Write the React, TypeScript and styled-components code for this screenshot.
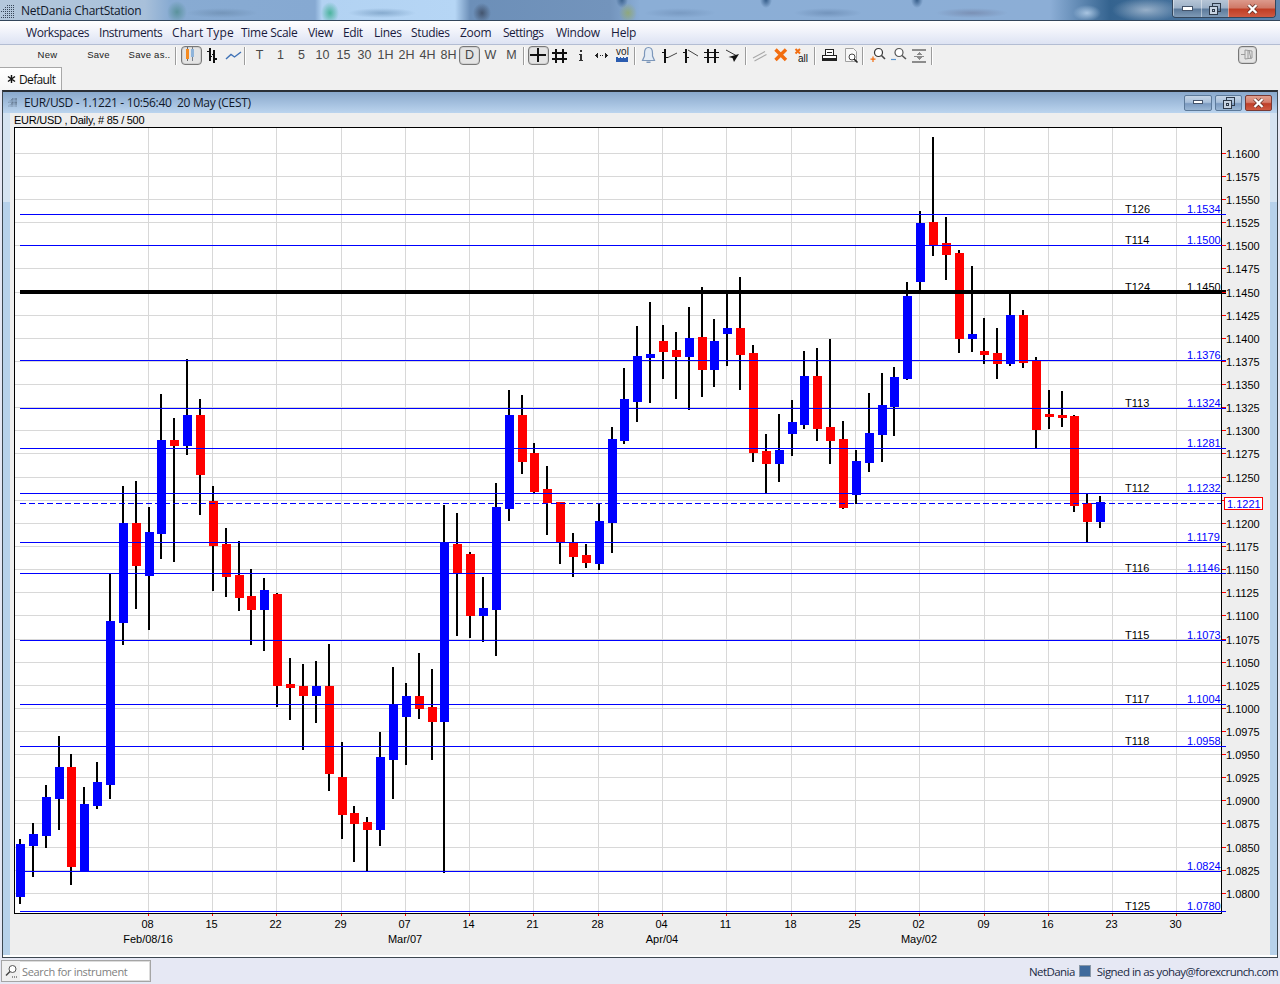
import React from "react";
import styled, { createGlobalStyle } from "styled-components";

const Global = createGlobalStyle`
  html, body { margin: 0; padding: 0; background: #e6e8f4; }
  #root { width: 1280px; height: 984px; overflow: hidden; }
`;

const UI = `"Open Sans", "Noto Sans", "Liberation Sans", sans-serif`;
const ARIAL = `"Liberation Sans", Arial, sans-serif`;

const Page = styled.div`
  width: 1280px;
  height: 984px;
  display: flex;
  flex-direction: column;
  background: #e6e8f4;
  font-family: ${UI};
  overflow: hidden;
`;

const TitleBar = styled.header`
  height: 21px;
  box-sizing: border-box;
  border-bottom: 1px solid #33465c;
  display: flex;
  align-items: flex-start;
  background:
    radial-gradient(ellipse 10px 11px at 177px 12px, rgba(60,130,120,.6), transparent),
    radial-gradient(ellipse 36px 5px at 222px 13px, rgba(80,110,140,.35), transparent),
    radial-gradient(ellipse 9px 11px at 330px 13px, rgba(40,170,130,.75), transparent),
    radial-gradient(ellipse 34px 5px at 382px 13px, rgba(90,130,170,.5), transparent),
    radial-gradient(ellipse 9px 10px at 482px 13px, rgba(50,60,80,.7), transparent),
    radial-gradient(ellipse 9px 10px at 628px 13px, rgba(150,170,90,.7), transparent),
    radial-gradient(ellipse 36px 5px at 680px 13px, rgba(80,110,150,.3), transparent),
    radial-gradient(ellipse 34px 5px at 828px 13px, rgba(70,100,140,.35), transparent),
    radial-gradient(ellipse 6px 8px at 766px 0, rgba(40,80,125,.85), transparent),
    radial-gradient(ellipse 6px 8px at 917px 0, rgba(40,80,125,.85), transparent),
    radial-gradient(ellipse 6px 8px at 622px 0, rgba(40,80,125,.75), transparent),
    radial-gradient(ellipse 36px 5px at 972px 13px, rgba(90,90,120,.35), transparent),
    radial-gradient(ellipse 14px 8px at 1087px 13px, rgba(190,215,240,.8), transparent),
    radial-gradient(ellipse 34px 12px at 1146px 10px, rgba(190,205,222,.7), transparent),
    linear-gradient(90deg, #b4c8dc 0, #a8c0da 145px, #88abd2 170px, #86a9d2 315px, #b2d2f2 322px, #b6d6f5 455px, #6c8fb8 470px, #7394bc 610px, #8baed6 640px, #8caed6 1050px, #34638f 1110px, #5e86b0 1280px);
`;

const AppGrip = styled.svg`
  width: 15px;
  height: 14px;
  margin: 5px 0 0 1px;
  flex: none;
`;

const AppName = styled.span`
  margin: 2px 0 0 5px;
  font-size: 12px;
  line-height: 17px;
  color: #10182a;
  letter-spacing: -0.26px;
`;

const WinControls = styled.div`
  margin-left: auto;
  margin-right: 4px;
  height: 17px;
  display: flex;
  border: 1px solid #33465c;
  border-top: 0;
  border-radius: 0 0 4px 4px;
  overflow: hidden;
`;

const WinBtn = styled.div<{ $w: number; $close?: boolean }>`
  width: ${(p) => p.$w}px;
  display: flex;
  align-items: center;
  justify-content: center;
  border-left: 1px solid rgba(255, 255, 255, 0.45);
  background: ${(p) =>
    p.$close
      ? "linear-gradient(180deg,#dc9a8c 0,#d07a68 45%,#c03e25 55%,#cf5a42 100%)"
      : "linear-gradient(180deg,#b6c5d6 0,#9db1c8 45%,#5d7b9c 55%,#7f9ab6 100%)"};
`;

const MenuBar = styled.nav`
  height: 24px;
  box-sizing: border-box;
  border-bottom: 1px solid #b3bdd3;
  padding-left: 26px;
  display: flex;
  align-items: center;
  background: linear-gradient(180deg, #ffffff 0, #f6f7fc 30%, #dde3f3 100%);
`;

const MenuItem = styled.span<{ $w: number; $sp: number }>`
  width: ${(p) => p.$w}px;
  flex: none;
  font-size: 12px;
  color: #191a3c;
  letter-spacing: ${(p) => p.$sp}px;
  line-height: 20px;
  white-space: nowrap;
`;

const Toolbar = styled.div`
  height: 22px;
  box-sizing: border-box;
  padding: 1px 23px 0 22px;
  display: flex;
  align-items: flex-start;
  background: #f0f0f0;
`;

const SaveBtn = styled.div`
  width: 51px;
  height: 19px;
  font: 9.5px/17px ${ARIAL};
  letter-spacing: 0.25px;
  color: #222;
  text-align: center;
  flex: none;
`;

const Sep = styled.div<{ $l?: number; $r?: number }>`
  width: 1px;
  height: 18px;
  margin: 1px ${(p) => p.$r ?? 0}px 0 ${(p) => p.$l ?? 0}px;
  background: #9c9c9c;
  border-right: 1px solid #fff;
  flex: none;
`;

const ToolBtn = styled.div<{ $on?: boolean }>`
  width: 21px;
  height: 19px;
  box-sizing: border-box;
  flex: none;
  display: flex;
  align-items: center;
  justify-content: center;
  font: 12.5px/19px ${ARIAL};
  color: #484848;
  border-radius: 4px;
  ${(p) => (p.$on ? "border: 1px solid #777; background: #e4e4e4; box-shadow: inset 0 0 0 1px #d0d0d0;" : "")}
`;

const Ico = styled.svg`
  width: 21px;
  height: 19px;
  flex: none;
`;

const PinBtn = styled(ToolBtn)`
  margin-left: auto;
  width: 19px;
  height: 18px;
`;

const TabStrip = styled.div`
  height: 23px;
  background: #f0f0f0;
  display: flex;
  align-items: flex-end;
`;

const Tab = styled.div`
  width: 62px;
  height: 23px;
  box-sizing: border-box;
  border: 1px solid #a8a8a8;
  border-bottom: 0;
  border-left: 0;
  background: linear-gradient(180deg, #ffffff, #f6f6f6);
  display: flex;
  align-items: center;
  padding-left: 7px;
  gap: 3px;
  font-size: 12px;
  letter-spacing: -0.65px;
  color: #111;
`;

const ChartWindow = styled.section`
  height: 868px;
  margin: 0 2px;
  box-sizing: border-box;
  border: 1px solid #3d4750;
  border-top: 2px solid #2a2f36;
  display: flex;
  flex-direction: column;
  background: #fff;
`;

const ChartTitle = styled.div`
  height: 21px;
  flex: none;
  display: flex;
  align-items: center;
  padding-left: 5px;
  background: linear-gradient(180deg, #8aa9cd 0, #a2bedd 50%, #bbd4ee 100%);
`;

const ChartTitleText = styled.span`
  margin-left: 6px;
  font-size: 12px;
  letter-spacing: -0.33px;
  color: #10182a;
  white-space: pre;
`;

const InnerControls = styled.div`
  margin-left: auto;
  margin-right: 5px;
  display: flex;
  gap: 3px;
`;

const InnerBtn = styled.div<{ $close?: boolean; $w?: number }>`
  width: ${(p) => p.$w ?? 27}px;
  height: 16px;
  box-sizing: border-box;
  border: 1px solid ${(p) => (p.$close ? "#7a3a34" : "#5d7a9a")};
  border-radius: 2px;
  display: flex;
  align-items: center;
  justify-content: center;
  background: ${(p) =>
    p.$close
      ? "linear-gradient(180deg,#e0a090 0,#d67e6c 45%,#be3e28 55%,#cf5a42 100%)"
      : "linear-gradient(180deg,#c4d4e6 0,#a9c0da 45%,#7b9ac0 55%,#9ab6d4 100%)"};
`;

const ChartBody = styled.div`
  height: 842px;
  flex: none;
  padding: 0 7px;
  background: linear-gradient(180deg, #d5e3f1 0, #d5e3f1 89px, #b7d1ea 89px);
`;

const ChartPanel = styled.div`
  height: 842px;
  background: #eeeeee;
  display: flex;
  flex-direction: column;
`;

const ChartCaption = styled.div`
  height: 14px;
  flex: none;
  padding-left: 4px;
  font: 11px/14px ${ARIAL};
  letter-spacing: -0.26px;
  color: #000;
`;

const PlotSvg = styled.svg`
  width: 1259px;
  height: 828px;
  display: block;
  shape-rendering: crispEdges;
`;

const AxisText = styled.text<{ $c?: string }>`
  font: 11px ${ARIAL};
  fill: ${(p) => p.$c ?? "#000"};
`;

const StatusBar = styled.footer`
  height: 26px;
  flex: none;
  display: flex;
  align-items: center;
  padding: 0 2px 0 1px;
  box-sizing: border-box;
  background: #e6e8f4;
`;

const SearchBox = styled.div`
  width: 150px;
  height: 22px;
  box-sizing: border-box;
  border: 1px solid #a5a5a5;
  box-shadow: inset 0 0 0 1px #dcdcdc;
  background: #fff;
  display: flex;
  align-items: center;
  overflow: hidden;
`;

const SearchIcon = styled.div`
  width: 18px;
  height: 20px;
  flex: none;
  background: #f0f0f0;
  display: flex;
  align-items: center;
  justify-content: center;
`;

const SearchHint = styled.span`
  margin-left: 2px;
  font-size: 11px;
  letter-spacing: -0.33px;
  color: #808080;
`;

const StatusRight = styled.div`
  margin-left: auto;
  display: flex;
  align-items: center;
  font-size: 11.5px;
  letter-spacing: -0.55px;
  color: #1a2a44;
`;

const StatusSwatch = styled.span`
  width: 12px;
  height: 12px;
  margin: 0 6px 0 4px;
  box-sizing: border-box;
  border: 1px solid #8a98a8;
  background: #3f6a9c;
`;

/* ---------- data ---------- */
type C = [0 | 1, number, number, number, number]; // 0 blue, 1 red: high, top, bottom, low
const candles: C[] = [
  [0,839,844,897,904],[0,823,834,846,877],[0,785,797,836,848],[0,736,767,799,830],[1,754,767,867,885],
  [0,787,804,871,871],[0,762,782,806,809],[0,573,621,785,799],[0,486,523,623,645],[1,481,523,566,609],
  [0,507,532,576,630],[0,394,440,534,559],[1,418,440,446,562],[0,359,415,446,455],[1,399,415,475,515],
  [1,486,501,546,591],[1,528,544,577,597],[1,541,575,598,611],[1,569,596,610,645],[0,578,590,610,651],
  [1,593,594,686,707],[1,658,684,688,720],[1,664,686,696,750],[0,661,686,696,723],[1,644,686,774,791],
  [1,742,777,815,839],[1,806,813,824,862],[1,817,822,830,871],[0,732,757,830,846],[0,667,704,760,799],
  [0,683,696,717,765],[1,653,696,709,719],[1,669,707,722,760],[0,505,543,722,873],[1,513,544,573,636],
  [1,552,554,616,638],[0,577,608,616,642],[0,483,507,610,656],[0,390,415,509,521],[1,395,415,462,474],
  [1,443,453,492,493],[1,466,489,503,535],[1,502,502,543,564],[1,533,543,557,577],[1,544,555,563,568],
  [0,503,521,564,570],[0,427,439,523,553],[0,368,399,441,444],[0,326,356,402,422],[0,302,354,358,403],
  [1,325,341,352,379],[1,332,350,357,399],[0,307,338,357,410],[1,287,337,370,397],[0,319,341,370,387],
  [0,293,328,334,366],[1,277,328,355,390],[1,345,353,453,462],[1,434,451,464,493],[0,414,450,464,482],
  [0,400,422,434,456],[0,351,376,425,429],[1,348,376,429,441],[1,339,427,441,464],[1,421,439,508,509],
  [0,450,461,495,504],[0,393,433,463,472],[0,373,405,435,462],[0,367,377,407,436],[0,282,296,379,380],
  [0,211,223,282,292],[1,137,222,245,256],[1,217,243,255,280],[1,250,253,339,353],[0,266,334,339,352],
  [1,318,351,355,364],[1,328,353,364,379],[0,293,315,364,366],[1,310,315,363,368],[1,357,361,430,448],
  [1,390,414,417,429],[1,391,415,418,427],[1,415,416,506,512],[1,493,503,522,542],[0,496,502,522,528],
];

const priceTicks: [string, number][] = [
  ["1.1600",153],["1.1575",176],["1.1550",199],["1.1525",222],["1.1500",245],["1.1475",268],["1.1450",292],
  ["1.1425",315],["1.1400",338],["1.1375",361],["1.1350",384],["1.1325",407],["1.1300",430],["1.1275",453],
  ["1.1250",477],["",500],["1.1200",523],["1.1175",546],["1.1150",569],["1.1125",592],["1.1100",615],
  ["1.1075",639],["1.1050",662],["1.1025",685],["1.1000",708],["1.0975",731],["1.0950",754],["1.0925",777],
  ["1.0900",800],["1.0875",823],["1.0850",847],["1.0825",870],["1.0800",893],
];

const timeTicks: [string, number, string?][] = [
  ["08",148,"Feb/08/16"],["15",212],["22",276],["29",341],["07",405,"Mar/07"],["14",469],["21",533],["28",598],
  ["04",662,"Apr/04"],["11",726],["18",791],["25",855],["02",919,"May/02"],["09",984],["16",1048],["23",1112],["30",1176],
];

type L = { y: number; v: string; t?: string; end?: number };
const levels: L[] = [
  { y: 214, v: "1.1534", t: "T126" },
  { y: 245, v: "1.1500", t: "T114" },
  { y: 360, v: "1.1376" },
  { y: 408, v: "1.1324", t: "T113" },
  { y: 448, v: "1.1281" },
  { y: 493, v: "1.1232", t: "T112" },
  { y: 542, v: "1.1179" },
  { y: 573, v: "1.1146", t: "T116" },
  { y: 640, v: "1.1073", t: "T115" },
  { y: 704, v: "1.1004", t: "T117" },
  { y: 746, v: "1.0958", t: "T118" },
  { y: 871, v: "1.0824", end: 1221 },
  { y: 911, v: "1.0780", t: "T125" },
];

const BLUE = "#0000ff";
const RED = "#ff0000";

function Chart() {
  return (
    <PlotSvg viewBox="10 127 1259 828">
      <rect x={14} y={127} width={1208} height={787} fill="#000" />
      <rect x={15} y={128} width={1206} height={785} fill="#fff" />
      {priceTicks.map(([, y]) => (
        <rect key={y} x={15} y={y} width={1206} height={1} fill="#d8d8d8" />
      ))}
      {timeTicks.map(([, x]) => (
        <rect key={x} x={x} y={128} width={1} height={785} fill="#d8d8d8" />
      ))}
      {candles.map(([c, hi, top, bot, lo], i) => {
        const left = Math.round(16 + 12.857 * i + (i >= 25 ? 0.1 : 0));
        return (
          <g key={i}>
            <rect x={left + 3} y={hi} width={2} height={lo - hi} fill="#000" />
            <rect x={left} y={top} width={9} height={bot - top} fill={c ? RED : BLUE} />
          </g>
        );
      })}
      {levels.map((l) => (
        <g key={l.y}>
          <rect x={20} y={l.y} width={(l.end ?? 1226) - 20} height={1} fill={BLUE} />
          {l.t && <AxisText x={1125} y={l.y - 1}>{l.t}</AxisText>}
          <AxisText x={1187} y={l.y - 1} $c={BLUE}>{l.v}</AxisText>
        </g>
      ))}
      <AxisText x={1125} y={291}>T124</AxisText>
      <AxisText x={1187} y={291}>1.1450</AxisText>
      <rect x={20} y={290} width={1206} height={4} fill="#000" />
      <line x1={20} y1={503.5} x2={1221} y2={503.5} stroke={BLUE} strokeWidth={1} strokeDasharray="6 3" />
      {priceTicks.map(([s, y]) => (
        <g key={y}>
          <rect x={1222} y={y} width={4} height={1} fill={RED} />
          {s && <AxisText x={1226} y={y + 5}>{s}</AxisText>}
        </g>
      ))}
      <rect x={1224.5} y={497.5} width={38} height={12} fill="#fff" stroke={RED} />
      <AxisText x={1227} y={508} $c={BLUE}>1.1221</AxisText>
      {timeTicks.map(([s, x, sub]) => (
        <g key={x}>
          <rect x={x} y={914} width={1} height={2} fill={RED} />
          <AxisText x={x - 0.5} y={928} textAnchor="middle">{s}</AxisText>
          {sub && <AxisText x={x} y={943} textAnchor="middle">{sub}</AxisText>}
        </g>
      ))}
    </PlotSvg>
  );
}

/* ---------- icons ---------- */
const Grip = ({ n = 4 }: { n?: number }) => {
  const dots: React.ReactNode[] = [];
  for (let r = 0; r < 4; r++)
    for (let c = 0; c < 7; c++) {
      if (c < 3 - r) continue;
      dots.push(<rect key={`${r}-${c}`} x={c * 2} y={r * 2 + n} width={1} height={1} fill="#39485a" />);
    }
  return <>{dots}</>;
};

const i = {
  candles: (
    <Ico viewBox="0 0 21 19" shapeRendering="crispEdges">
      <rect x={6} y={1} width={1} height={14} fill="#6a6a6a" />
      <rect x={5} y={3} width={3} height={10} fill="#f58a1f" />
      <rect x={11} y={1} width={1} height={14} fill="#7a7f88" />
      <rect x={10} y={3} width={3} height={8} fill="#8fb4da" />
    </Ico>
  ),
  bars: (
    <Ico viewBox="0 0 21 19" shapeRendering="crispEdges" fill="#111">
      <rect x={7} y={2} width={2} height={13} />
      <rect x={5} y={5} width={2} height={1} />
      <rect x={9} y={10} width={1} height={1} />
      <rect x={11} y={4} width={2} height={13} />
      <rect x={10} y={8} width={1} height={1} />
      <rect x={13} y={12} width={2} height={2} />
    </Ico>
  ),
  line: (
    <Ico viewBox="0 0 21 19">
      <path d="M3 13 L8 8.5 L11.5 11 L18 6" fill="none" stroke="#3f72b6" strokeWidth={1.4} />
    </Ico>
  ),
  cross: (
    <Ico viewBox="0 0 21 19" shapeRendering="crispEdges" fill="#111">
      <rect x={9} y={2} width={2} height={14} />
      <rect x={2} y={8} width={16} height={2} />
    </Ico>
  ),
  hash: (
    <Ico viewBox="0 0 21 19" shapeRendering="crispEdges" fill="#111">
      <rect x={6} y={3} width={2} height={14} />
      <rect x={13} y={3} width={2} height={14} />
      <rect x={3} y={6} width={15} height={2} />
      <rect x={3} y={12} width={15} height={2} />
    </Ico>
  ),
  info: (
    <Ico viewBox="0 0 21 19" shapeRendering="crispEdges" fill="#333">
      <rect x={10} y={4} width={2} height={2} />
      <rect x={9} y={8} width={3} height={1} />
      <rect x={10} y={8} width={2} height={7} />
      <rect x={9} y={14} width={4} height={1} />
    </Ico>
  ),
  arrows: (
    <Ico viewBox="0 0 21 19" shapeRendering="crispEdges" fill="#222">
      <path d="M4 9.5 L7 6.5 V12.5Z" />
      <path d="M17 9.5 L14 6.5 V12.5Z" />
      <rect x={9} y={9} width={1} height={1} />
      <rect x={11} y={9} width={1} height={1} />
    </Ico>
  ),
  vol: (
    <Ico viewBox="0 0 21 19">
      <text x={10.5} y={9} textAnchor="middle" fontFamily={ARIAL} fontSize={10} fill="#222">vol</text>
      <path d="M4 11 h2 v1 h2 v-1 h1 v1 h2 v-1 h1 v1 h2 v-1 h2 v5 h-12z" fill="#2b5cb0" />
    </Ico>
  ),
  bell: (
    <Ico viewBox="0 0 21 19">
      <path d="M10.5 1.5 C7.5 1.5 6.5 4 6.5 7 V10 L4.5 14.5 H16.5 L14.5 10 V7 C14.5 4 13.5 1.5 10.5 1.5Z" fill="#e4ecf5" stroke="#7c97ba" strokeWidth={1.2} />
      <path d="M8.5 15.5 h4 v1.5 h-4z" fill="#7c97ba" />
    </Ico>
  ),
  trendUp: (
    <Ico viewBox="0 0 21 19">
      <g shapeRendering="crispEdges" fill="#111">
        <rect x={5} y={3} width={2} height={14} />
        <rect x={3} y={6} width={2} height={1} />
        <rect x={7} y={11} width={2} height={1} />
      </g>
      <path d="M9 11.5 L18 7" stroke="#444" strokeWidth={1} />
    </Ico>
  ),
  trendDown: (
    <Ico viewBox="0 0 21 19">
      <g shapeRendering="crispEdges" fill="#111">
        <rect x={5} y={3} width={2} height={14} />
        <rect x={3} y={6} width={2} height={1} />
        <rect x={7} y={11} width={2} height={1} />
      </g>
      <path d="M8 4 L18 10" stroke="#444" strokeWidth={1} />
    </Ico>
  ),
  channel: (
    <Ico viewBox="0 0 21 19" shapeRendering="crispEdges" fill="#111">
      <rect x={6} y={3} width={2} height={14} />
      <rect x={13} y={3} width={2} height={14} />
      <rect x={3} y={6} width={15} height={1} />
      <rect x={3} y={11} width={15} height={1} />
    </Ico>
  ),
  cursor: (
    <Ico viewBox="0 0 21 19">
      <path d="M4 4 L15 10" stroke="#333" strokeWidth={1} />
      <path d="M17 8 L12 16 L10.5 12 L6.5 11Z" fill="#111" />
    </Ico>
  ),
  pencil: (
    <Ico viewBox="0 0 21 19">
      <path d="M4 12 L16 5.5 M5.5 15 L17.5 8.5" stroke="#a8a8a8" strokeWidth={1.1} />
    </Ico>
  ),
  del: (
    <Ico viewBox="0 0 21 19">
      <path d="M5.5 3.5 L16 14 M16 3.5 L5.5 14" stroke="#f26d10" strokeWidth={3.4} />
    </Ico>
  ),
  delAll: (
    <Ico viewBox="0 0 21 19">
      <path d="M4.5 3 L9 7.5 M9 3 L4.5 7.5" stroke="#f26d10" strokeWidth={2} />
      <text x={7} y={16} fontFamily={ARIAL} fontSize={10} fill="#111">all</text>
    </Ico>
  ),
  print: (
    <Ico viewBox="0 0 21 19" shapeRendering="crispEdges">
      <path d="M6.5 3.5 h8 v6 h-8z M3.5 9.5 h14 v3 h-14z" fill="#fff" stroke="#222" />
      <rect x={3} y={13} width={15} height={2} fill="#222" />
      <rect x={8} y={6} width={5} height={1} fill="#222" />
    </Ico>
  ),
  preview: (
    <Ico viewBox="0 0 21 19">
      <path d="M5.5 2.5 h8 l3 3 v10 h-11z" fill="#f8f8f8" stroke="#a0a0a0" />
      <circle cx={12} cy={11} r={3} fill="#fff" stroke="#444" />
      <path d="M14 13 L17.5 16.5" stroke="#222" strokeWidth={1.6} />
    </Ico>
  ),
  zoomIn: (
    <Ico viewBox="0 0 21 19">
      <circle cx={11.5} cy={6.5} r={4} fill="#fff" stroke="#333" strokeWidth={1.2} />
      <path d="M14.5 9.5 L18 13" stroke="#444" strokeWidth={1.6} />
      <path d="M6 10.5 V16 M3.5 13.2 H8.5" stroke="#f26d10" strokeWidth={1.2} />
    </Ico>
  ),
  zoomOut: (
    <Ico viewBox="0 0 21 19">
      <circle cx={11} cy={6.5} r={4} fill="#fff" stroke="#555" strokeWidth={1.2} />
      <path d="M14 9.5 L18 13" stroke="#555" strokeWidth={1.6} />
      <path d="M3 13.5 H8" stroke="#5a96d0" strokeWidth={1.2} />
    </Ico>
  ),
  fit: (
    <Ico viewBox="0 0 21 19" shapeRendering="crispEdges" fill="#8c8c8c">
      <rect x={3} y={3} width={14} height={2} />
      <rect x={3} y={15} width={14} height={2} />
      <path d="M7 9 h6 l-3 -3z M7 11 h6 l-3 3z" />
      <rect x={5} y={10} width={10} height={1} />
    </Ico>
  ),
  pin: (
    <Ico viewBox="0 0 21 19">
      <path d="M4 8.5 H8 M8 4 V13 M8 4 L15 5 V12 L8 13 M11 5 V12 M12 4 L14 13" fill="none" stroke="#9a9a9a" strokeWidth={1} />
    </Ico>
  ),
};

const Min = ({ w = 12, h = 4 }: { w?: number; h?: number }) => (
  <svg width={w} height={h + 2}><rect x={0.5} y={0.5} width={w - 1} height={h} fill="#fff" stroke="#44536a" /></svg>
);
const Max = () => (
  <svg width={12} height={12}>
    <rect x={3.5} y={0.5} width={8} height={8} fill="none" stroke="#2e3a4a" />
    <rect x={0.5} y={3.5} width={8} height={8} fill="#c8d4e2" stroke="#2e3a4a" />
    <rect x={3.5} y={6.5} width={2} height={2} fill="none" stroke="#2e3a4a" />
  </svg>
);
const Close = ({ w = 11 }: { w?: number }) => (
  <svg width={w} height={10} viewBox="0 0 11 10">
    <path d="M1.5 1 L9.5 9 M9.5 1 L1.5 9" stroke="#5a2a22" strokeWidth={3.6} />
    <path d="M1.5 1 L9.5 9 M9.5 1 L1.5 9" stroke="#fff" strokeWidth={2.4} />
  </svg>
);

const menus: [string, number, number][] = [
  ["Workspaces",73,-0.45],["Instruments",73,-0.45],["Chart Type",69,0.12],["Time Scale",67,-0.28],["View",35,-0.3],
  ["Edit",31,-0.4],["Lines",37,-0.3],["Studies",49,-0.35],["Zoom",43,-0.28],["Settings",53,-0.5],["Window",55,-0.28],["Help",40,-0.2],
];
const frames = ["T","1","5","10","15","30","1H","2H","4H","8H"];

export default function App() {
  return (
    <Page>
      <Global />
      <TitleBar>
        <AppGrip viewBox="0 0 15 14"><Grip n={6} /><Grip n={0} /></AppGrip>
        <AppName>NetDania ChartStation</AppName>
        <WinControls>
          <WinBtn $w={27}><Min w={11} h={4} /></WinBtn>
          <WinBtn $w={26}><Max /></WinBtn>
          <WinBtn $w={46} $close><Close /></WinBtn>
        </WinControls>
      </TitleBar>
      <MenuBar>
        {menus.map(([m, w, sp]) => <MenuItem key={m} $w={w} $sp={sp}>{m}</MenuItem>)}
      </MenuBar>
      <Toolbar>
        <SaveBtn>New</SaveBtn>
        <SaveBtn>Save</SaveBtn>
        <SaveBtn>Save as..</SaveBtn>
        <Sep $r={4} />
        <ToolBtn $on>{i.candles}</ToolBtn>
        <ToolBtn>{i.bars}</ToolBtn>
        <ToolBtn>{i.line}</ToolBtn>
        <Sep $r={3} />
        {frames.map((f) => <ToolBtn key={f}>{f}</ToolBtn>)}
        <ToolBtn $on>D</ToolBtn>
        <ToolBtn>W</ToolBtn>
        <ToolBtn>M</ToolBtn>
        <Sep $l={1} $r={3} />
        <ToolBtn $on>{i.cross}</ToolBtn>
        <ToolBtn>{i.hash}</ToolBtn>
        <ToolBtn>{i.info}</ToolBtn>
        <ToolBtn>{i.arrows}</ToolBtn>
        <ToolBtn>{i.vol}</ToolBtn>
        <Sep $l={1} $r={2} />
        <ToolBtn>{i.bell}</ToolBtn>
        <ToolBtn>{i.trendUp}</ToolBtn>
        <ToolBtn>{i.trendDown}</ToolBtn>
        <ToolBtn>{i.channel}</ToolBtn>
        <ToolBtn>{i.cursor}</ToolBtn>
        <Sep $l={2} $r={2} />
        <ToolBtn>{i.pencil}</ToolBtn>
        <ToolBtn>{i.del}</ToolBtn>
        <ToolBtn>{i.delAll}</ToolBtn>
        <Sep $l={2} $r={3} />
        <ToolBtn>{i.print}</ToolBtn>
        <ToolBtn>{i.preview}</ToolBtn>
        <Sep $l={1} $r={3} />
        <ToolBtn>{i.zoomIn}</ToolBtn>
        <ToolBtn>{i.zoomOut}</ToolBtn>
        <ToolBtn>{i.fit}</ToolBtn>
        <Sep $l={1} />
        <PinBtn $on>{i.pin}</PinBtn>
      </Toolbar>
      <TabStrip>
        <Tab>
          <svg width={9} height={10} viewBox="0 0 9 10"><path d="M4.5 1 V9 M1 2.5 L8 7.5 M8 2.5 L1 7.5" stroke="#111" strokeWidth={1.4} /></svg>
          Default
        </Tab>
      </TabStrip>
      <ChartWindow>
        <ChartTitle>
          <svg width={10} height={9} viewBox="0 0 14 14"><Grip n={6} /><Grip n={0} /></svg>
          <ChartTitleText>EUR/USD - 1.1221 - 10:56:40  20 May (CEST)</ChartTitleText>
          <InnerControls>
            <InnerBtn $w={28}><Min w={10} h={3} /></InnerBtn>
            <InnerBtn><Max /></InnerBtn>
            <InnerBtn $close><Close /></InnerBtn>
          </InnerControls>
        </ChartTitle>
        <ChartBody>
          <ChartPanel>
            <ChartCaption>EUR/USD , Daily, # 85 / 500</ChartCaption>
            <Chart />
          </ChartPanel>
        </ChartBody>
      </ChartWindow>
      <StatusBar>
        <SearchBox>
          <SearchIcon>
            <svg width={14} height={14} viewBox="0 0 14 14">
              <circle cx={8.5} cy={5} r={3.5} fill="#fff" stroke="#555" />
              <path d="M6 7.5 L2 11.5" stroke="#444" strokeWidth={1.5} />
              <path d="M8 13 h1 M10 13 h1 M12 13 h1" stroke="#333" />
            </svg>
          </SearchIcon>
          <SearchHint>Search for instrument</SearchHint>
        </SearchBox>
        <StatusRight>
          NetDania
          <StatusSwatch />
          Signed in as yohay@forexcrunch.com
        </StatusRight>
      </StatusBar>
    </Page>
  );
}
